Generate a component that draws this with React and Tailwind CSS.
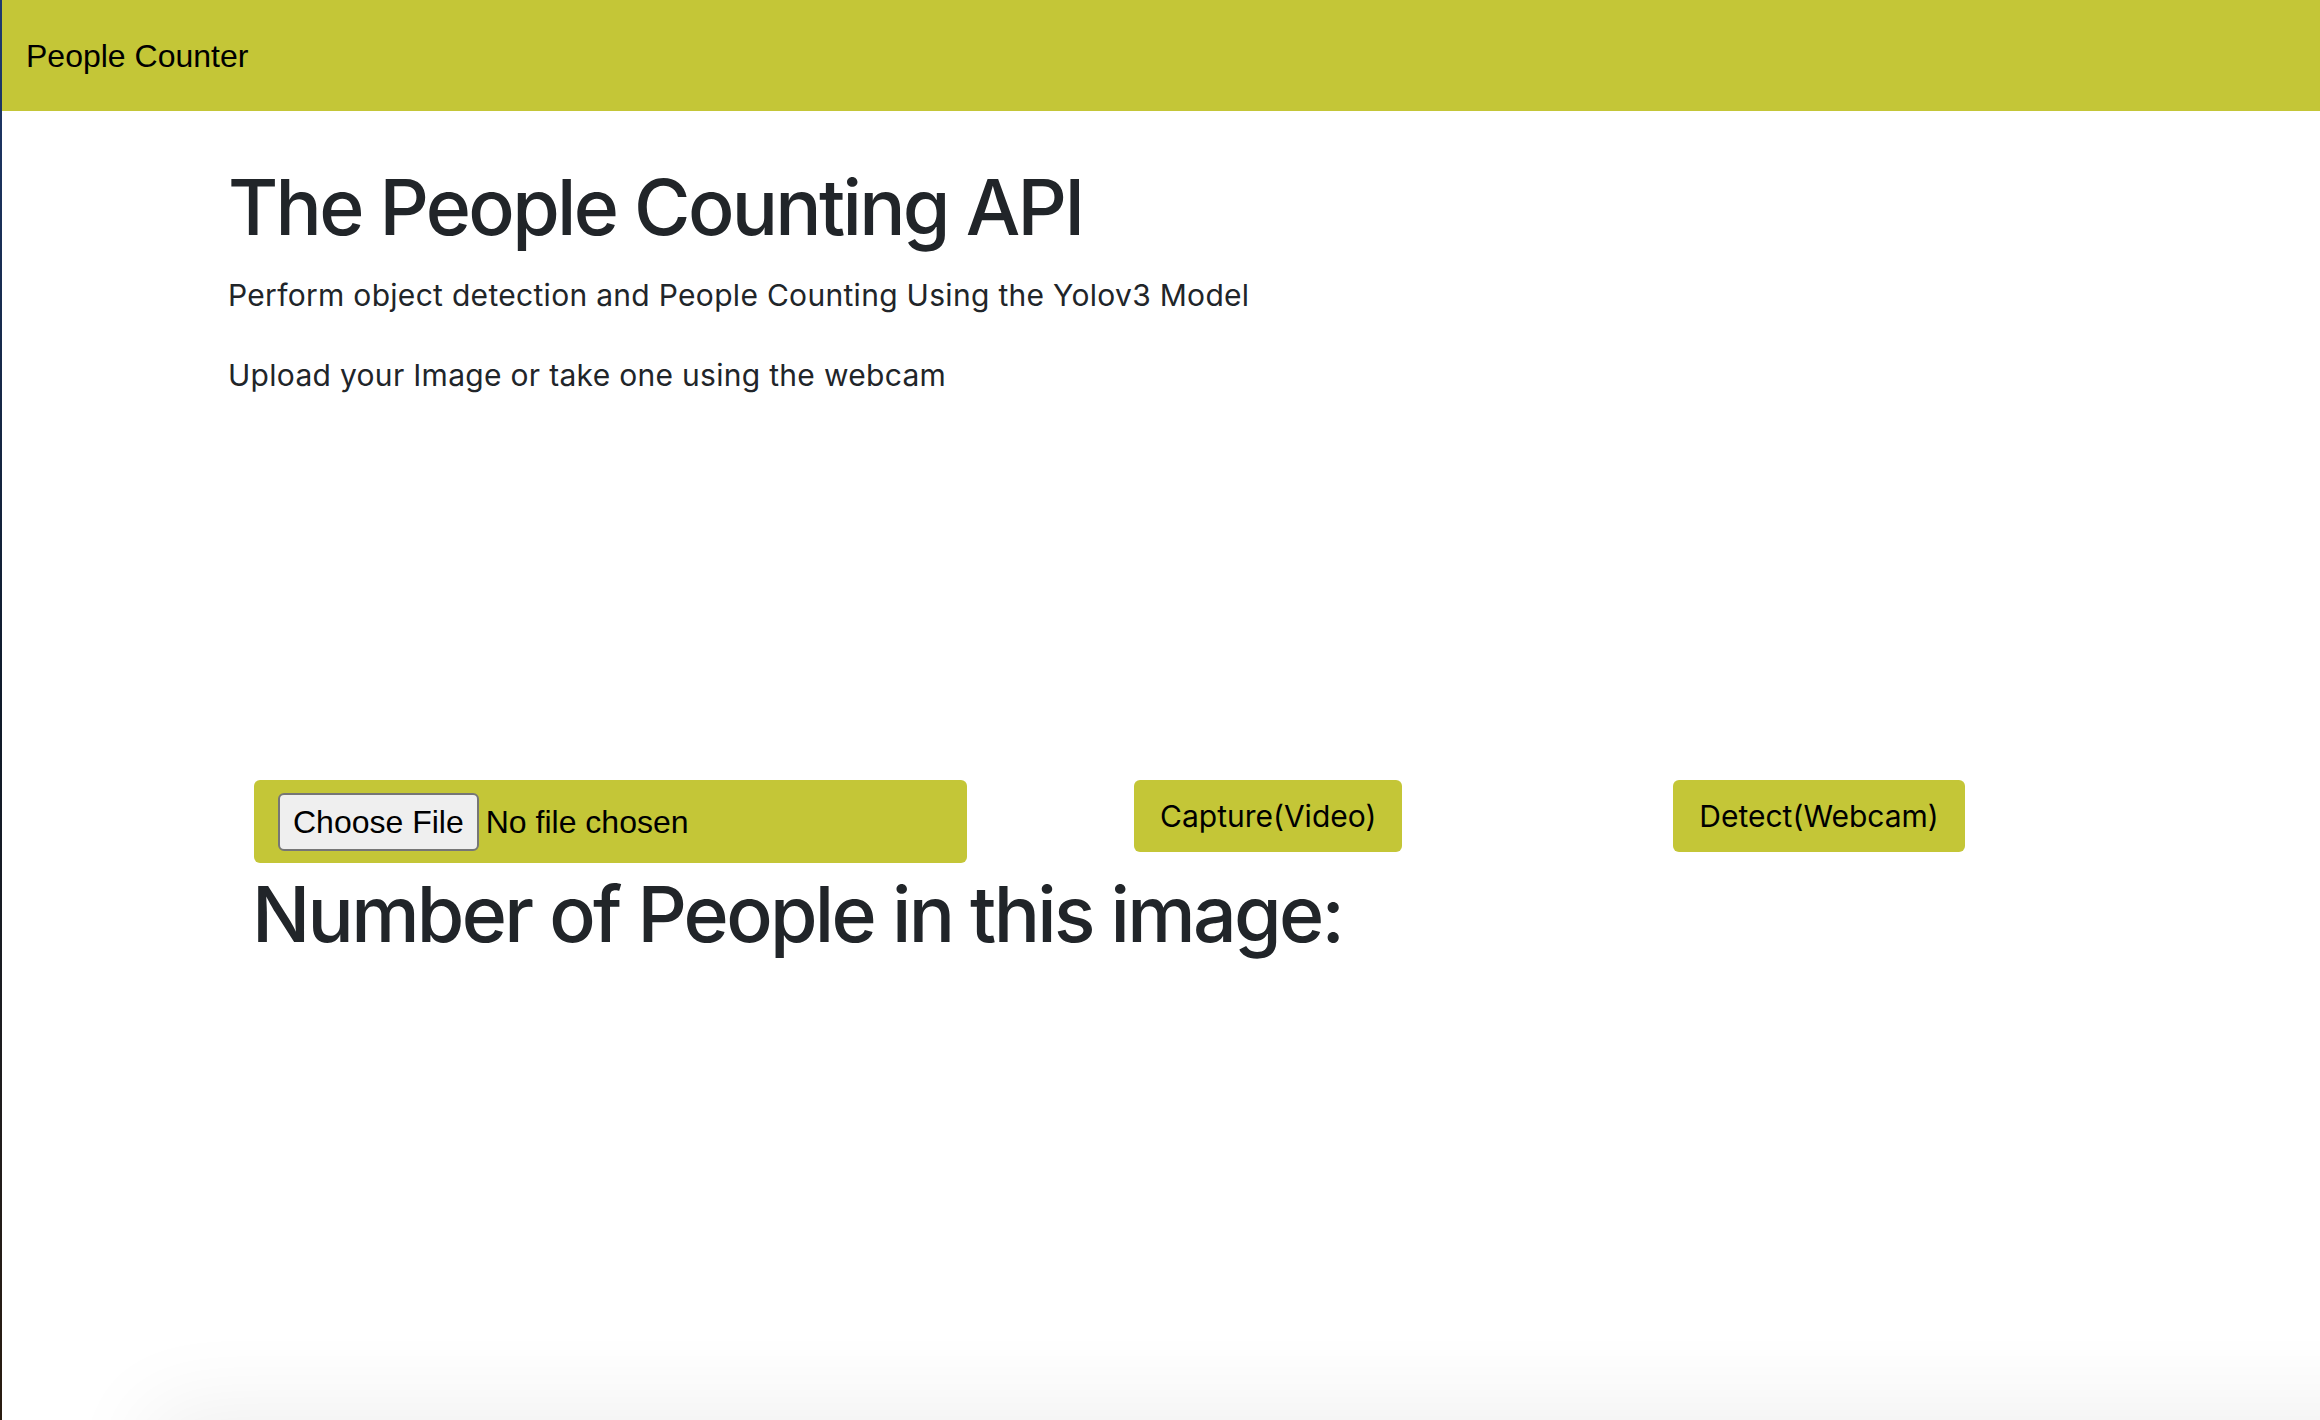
import React from 'react';

const OLIVE = 'bg-[#c4c637]';

const Navbar = () => (
  <nav className={`${OLIVE} h-[111px] flex items-center pl-[24px]`}>
    <span className="text-[32px] text-black font-['Liberation_Sans',Arial,sans-serif]">People Counter</span>
  </nav>
);

const FileBox = () => (
  <div className={`${OLIVE} w-[713px] h-[83px] rounded-[6px] flex items-start pt-[13px] pl-[24px]`}>
    <label className="h-[58px] px-[13px] flex items-center bg-[#efefef] border-2 border-[#767676] rounded-[6px] text-[32px] text-black font-['Liberation_Sans',Arial,sans-serif] cursor-pointer">
      Choose File
      <input type="file" className="hidden" />
    </label>
    <span className="ml-[7px] h-[58px] flex items-center text-[32px] text-black font-['Liberation_Sans',Arial,sans-serif]">
      No file chosen
    </span>
  </div>
);

const ActionButton = ({ children, className = '' }) => (
  <button
    className={`${OLIVE} h-[72px] px-[26px] rounded-[6px] text-[30px] text-black font-['Inter',sans-serif] ${className}`}
  >
    {children}
  </button>
);

export default function App() {
  return (
    <div className="relative min-h-[1420px] overflow-hidden bg-white flex">
      <div className="w-[2px] shrink-0 bg-gradient-to-b from-[#1f3a6e] via-[#0f1a2a] to-[#2a1c10]" />
      <div className="flex-1 flex flex-col">
        <Navbar />
        <main className="pl-[226px] font-['Inter',sans-serif] text-[#212529]">
          <h1 className="mt-[50px] text-[77px] leading-[1.2] font-medium tracking-[-0.035em]">
            The People Counting API
          </h1>
          <p className="mt-[20px] text-[30px] leading-[1.5] tracking-[0.01em]">
            Perform object detection and People Counting Using the Yolov3 Model
          </p>
          <p className="mt-[35px] text-[30px] leading-[1.5] tracking-[0.01em]">
            Upload your Image or take one using the webcam
          </p>
          {/* webcam / preview area */}
          <div className="h-[382px]" />
          <div className="flex items-start pl-[26px]">
            <FileBox />
            <ActionButton className="ml-[167px]">Capture(Video)</ActionButton>
            <ActionButton className="ml-[271px]">Detect(Webcam)</ActionButton>
          </div>
          <h2 className="mt-[5px] pl-[24px] text-[77px] leading-[1.2] font-medium tracking-[-0.035em]">
            Number of People in this image:
          </h2>
        </main>
      </div>
      {/* shadow of an overlapping window at the bottom edge */}
      <div className="absolute left-[180px] top-[1440px] w-[2400px] h-[200px] bg-white shadow-[0_0_90px_30px_rgba(0,0,0,0.07)]" />
    </div>
  );
}
